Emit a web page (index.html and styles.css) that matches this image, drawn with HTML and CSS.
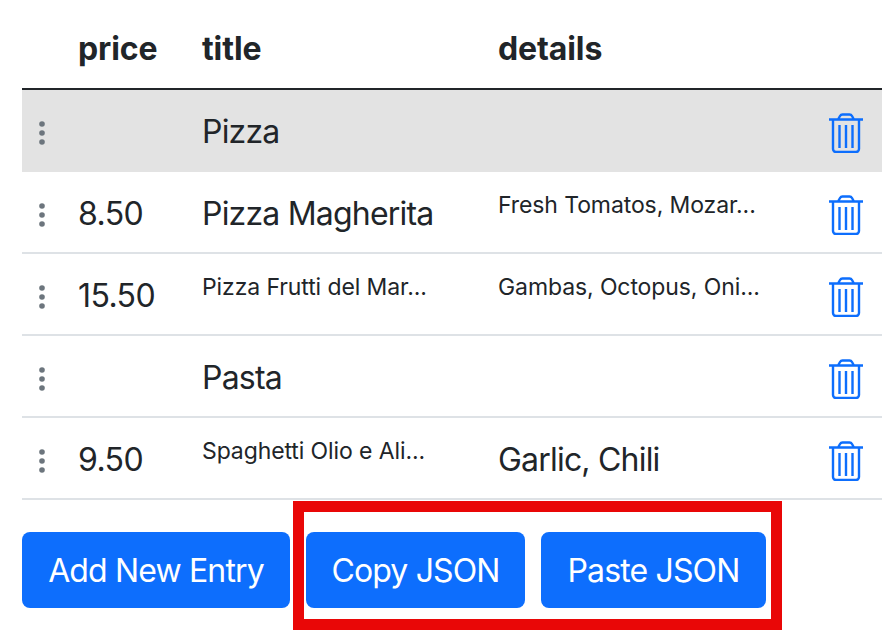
FILE: index.html
```html
<!DOCTYPE html>
<html lang="en">
<head>
    <meta charset="UTF-8">
    <meta name="viewport" content="width=device-width, initial-scale=1.0">
    <title>Menu Entries</title>
    <link rel="stylesheet" href="styles.css">
</head>
<body>
    <svg class="icon-defs" width="0" height="0" aria-hidden="true">
        <symbol id="dots" viewBox="0 0 8 28">
            <circle cx="4" cy="5" r="2.8"/>
            <circle cx="4" cy="14" r="2.8"/>
            <circle cx="4" cy="23" r="2.8"/>
        </symbol>
        <symbol id="trash" viewBox="0 0 36 40">
            <path d="M1 6.5h34M5 6.5V36a3 3 0 0 0 3 3h20a3 3 0 0 0 3-3V6.5M10 6.500 12 3a3 3 0 0 1 2.500-1.500h7A3 3 0 0 1 24 3l2 3.500M11.500 12v23M18 12v23M24.500 12v23"/>
        </symbol>
    </svg>

    <div class="container">
        <table class="entries">
            <thead>
                <tr>
                    <th class="col-handle"></th>
                    <th class="col-price">price</th>
                    <th class="col-title">title</th>
                    <th class="col-details">details</th>
                    <th class="col-action"></th>
                </tr>
            </thead>
            <tbody>
                <tr class="group-row">
                    <td><svg class="handle"><use href="#dots"/></svg></td>
                    <td></td>
                    <td>Pizza</td>
                    <td></td>
                    <td class="col-action"><svg class="delete"><use href="#trash"/></svg></td>
                </tr>
                <tr>
                    <td><svg class="handle"><use href="#dots"/></svg></td>
                    <td class="price">8.50</td>
                    <td>Pizza Magherita</td>
                    <td><span class="small-text">Fresh Tomatos, Mozar...</span></td>
                    <td class="col-action"><svg class="delete"><use href="#trash"/></svg></td>
                </tr>
                <tr>
                    <td><svg class="handle"><use href="#dots"/></svg></td>
                    <td class="price">15.50</td>
                    <td><span class="small-text">Pizza Frutti del Mar...</span></td>
                    <td><span class="small-text">Gambas, Octopus, Oni...</span></td>
                    <td class="col-action"><svg class="delete"><use href="#trash"/></svg></td>
                </tr>
                <tr>
                    <td><svg class="handle"><use href="#dots"/></svg></td>
                    <td></td>
                    <td>Pasta</td>
                    <td></td>
                    <td class="col-action"><svg class="delete"><use href="#trash"/></svg></td>
                </tr>
                <tr>
                    <td><svg class="handle"><use href="#dots"/></svg></td>
                    <td class="price">9.50</td>
                    <td><span class="small-text">Spaghetti Olio e Ali...</span></td>
                    <td>Garlic, Chili</td>
                    <td class="col-action"><svg class="delete"><use href="#trash"/></svg></td>
                </tr>
            </tbody>
        </table>

        <div class="actions">
            <button class="btn btn-add">Add New Entry</button>
            <button class="btn btn-copy">Copy JSON</button>
            <button class="btn btn-paste">Paste JSON</button>
            <div class="highlight"></div>
        </div>
    </div>
</body>
</html>
```

FILE: styles.css
```css
body {
    font-family: Inter, 'Liberation Sans', sans-serif;
    margin: 0;
    padding: 0;
    min-height: 638px;
    background: #fff;
    color: #212529;
}
.icon-defs {
    position: absolute;
}
.container {
    width: 860px;
    margin-left: 22px;
}
.entries {
    width: 860px;
    border-collapse: separate;
    border-spacing: 0;
    table-layout: fixed;
    font-size: 32px;
    letter-spacing: -0.8px;
}
th {
    height: 90px;
    padding: 8px 8px 0;
    box-sizing: border-box;
    text-align: left;
    font-weight: 700;
    letter-spacing: -0.1px;
    border-bottom: 2px solid #212529;
}
td {
    height: 82px;
    padding: 2px 8px 0;
    box-sizing: border-box;
    border-bottom: 2px solid #dee2e6;
}
.group-row td {
    background-color: #e3e3e3;
    border-bottom-color: #e3e3e3;
}
.col-handle {
    width: 48px;
}
.col-price {
    width: 124px;
}
.col-title {
    width: 296px;
}
.col-details {
    width: 330px;
}
td.col-action, th.col-action {
    width: 62px;
    padding: 0;
}
.price {
    letter-spacing: -0.6px;
}
.small-text {
    display: block;
    font-size: 23px;
    letter-spacing: -0.1px;
    position: relative;
    top: -8px;
}
.handle {
    display: block;
    width: 8px;
    height: 28px;
    margin: 4px 0 0 8px;
    fill: #6c757d;
}
.delete {
    display: block;
    width: 36px;
    height: 40px;
    margin: 6px 0 0 8px;
    fill: none;
    stroke: #0d6efd;
    stroke-width: 2.4;
}
.actions {
    position: relative;
    display: flex;
    margin-top: 32px;
}
.btn {
    height: 76px;
    padding: 0;
    border: none;
    border-radius: 8px;
    background-color: #0d6efd;
    color: #fff;
    font-family: inherit;
    font-size: 32px;
    letter-spacing: -0.85px;
    cursor: pointer;
}
.btn-add {
    width: 268px;
}
.btn-copy {
    width: 219px;
    margin-left: 16px;
}
.btn-paste {
    width: 225px;
    margin-left: 16px;
}
.highlight {
    position: absolute;
    left: 271px;
    top: -31px;
    width: 489px;
    height: 129px;
    box-sizing: border-box;
    border: 11px solid #e90707;
}
```
